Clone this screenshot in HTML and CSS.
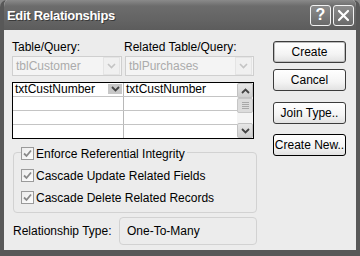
FILE: index.html
```html
<!DOCTYPE html>
<html>
<head>
    <title>Edit Relationships</title>
    <link rel="stylesheet" href="styles.css">
</head>
<body>
    <div class="window">
        <div class="titlebar">
            <span class="title">Edit Relationships</span>
            <div class="title-buttons">
                <span class="tbtn">?</span>
                <span class="tbtn close">
                    <svg width="13" height="13" viewBox="0 0 13 13"><path d="M2 2 L11 11 M11 2 L2 11" stroke="#fff" stroke-width="2.2" stroke-linecap="round"/></svg>
                </span>
            </div>
        </div>

        <div class="content">
            <div class="left">
                <div class="labels">
                    <span class="lbl-a">Table/Query:</span>
                    <span class="lbl-b">Related Table/Query:</span>
                </div>
                <div class="combos">
                    <div class="combo combo-a"><span>tblCustomer</span><span class="drop"><svg width="9" height="6" viewBox="0 0 9 6"><path d="M1 1 L4.5 4.5 L8 1" stroke="#c4c4c4" stroke-width="1.6" fill="none"/></svg></span></div>
                    <div class="combo combo-b"><span>tblPurchases</span><span class="drop"><svg width="9" height="6" viewBox="0 0 9 6"><path d="M1 1 L4.5 4.5 L8 1" stroke="#c4c4c4" stroke-width="1.6" fill="none"/></svg></span></div>
                </div>

                <div class="grid">
                    <div class="cells">
                        <div class="row">
                            <div class="cell c1">txtCustNumber<span class="cell-drop"><svg width="9" height="6" viewBox="0 0 9 6"><path d="M1 1 L4.5 4.5 L8 1" stroke="#444" stroke-width="1.8" fill="none"/></svg></span></div>
                            <div class="cell c2">txtCustNumber</div>
                        </div>
                        <div class="row"><div class="cell c1"></div><div class="cell c2"></div></div>
                        <div class="row"><div class="cell c1"></div><div class="cell c2"></div></div>
                        <div class="row last"><div class="cell c1"></div><div class="cell c2"></div></div>
                    </div>
                    <div class="scrollbar">
                        <div class="sb-btn"><svg width="9" height="6" viewBox="0 0 9 6"><path d="M1 5 L4.5 1.5 L8 5" stroke="#444" stroke-width="1.8" fill="none"/></svg></div>
                        <div class="sb-thumb"><span></span><span></span><span></span><span></span></div>
                        <div class="sb-track"></div>
                        <div class="sb-btn"><svg width="9" height="6" viewBox="0 0 9 6"><path d="M1 1 L4.5 4.5 L8 1" stroke="#444" stroke-width="1.8" fill="none"/></svg></div>
                    </div>
                </div>

                <div class="group">
                    <label class="check"><span class="box"><svg width="9" height="9" viewBox="0 0 9 9"><path d="M1 4.5 L3.5 7 L8 1.5" stroke="#8a8a8a" stroke-width="1.8" fill="none"/></svg></span>Enforce Referential Integrity</label>
                    <label class="check"><span class="box"><svg width="9" height="9" viewBox="0 0 9 9"><path d="M1 4.5 L3.5 7 L8 1.5" stroke="#8a8a8a" stroke-width="1.8" fill="none"/></svg></span>Cascade Update Related Fields</label>
                    <label class="check"><span class="box"><svg width="9" height="9" viewBox="0 0 9 9"><path d="M1 4.5 L3.5 7 L8 1.5" stroke="#8a8a8a" stroke-width="1.8" fill="none"/></svg></span>Cascade Delete Related Records</label>
                </div>

                <div class="reltype">
                    <span class="rel-label">Relationship Type:</span>
                    <div class="rel-box">One-To-Many</div>
                </div>
            </div>

            <div class="right">
                <button class="btn default">Create</button>
                <button class="btn">Cancel</button>
                <button class="btn join">Join Type..</button>
                <button class="btn focus">Create New..</button>
            </div>
        </div>
    </div>
</body>
</html>
```

FILE: styles.css
```css
body {
    margin: 0;
    background: #8a8a8a;
    font-family: "Liberation Sans", Arial, sans-serif;
    font-size: 11px;
    color: #000;
}
.window {
    width: 360px;
    height: 256px;
    box-sizing: border-box;
    background: #ececec;
    border: 4px solid #585858;
    border-top: none;
    border-bottom-width: 6px;
    border-radius: 7px 7px 0 0;
    display: flex;
    flex-direction: column;
    overflow: hidden;
}
.titlebar {
    height: 30px;
    margin: 0 -4px;
    padding: 0 7px;
    display: flex;
    align-items: center;
    justify-content: space-between;
    background: linear-gradient(#8a8a8a, #6c6c6c 20%, #636363 70%, #5c5c5c);
    border-top-left-radius: 7px;
    border-top-right-radius: 7px;
}
.title {
    color: #fff;
    font-weight: bold;
    font-size: 13px;
    letter-spacing: -0.3px;
    text-shadow: 1px 1px 0 #3a3a3a;
    padding-top: 1px;
}
.title-buttons {
    display: flex;
    gap: 2px;
    margin-right: -1px;
}
.tbtn {
    width: 19px;
    height: 19px;
    border: 1px solid #f2f2f2;
    border-radius: 3px;
    background: linear-gradient(#8c8c8c, #6a6a6a);
    color: #fff;
    font-weight: bold;
    font-size: 16px;
    display: flex;
    align-items: center;
    justify-content: center;
    line-height: 1;
}
.content {
    flex: 1;
    display: flex;
    padding: 9px 9px 0 8px;
    gap: 16px;
}
.left {
    width: 245px;
    display: flex;
    flex-direction: column;
}
.labels {
    display: flex;
    height: 15px;
    align-items: flex-end;
    font-size: 12px;
}
.lbl-a {
    width: 112px;
}
.combos {
    display: flex;
    gap: 3px;
    margin-top: 2px;
    width: 242px;
}
.combo {
    height: 18px;
    border: 1px solid #cfcfcf;
    background: #f4f4f4;
    color: #ababab;
    font-size: 12px;
    display: flex;
    align-items: center;
    justify-content: space-between;
    padding-left: 3px;
}
.combo-a {
    width: 105px;
}
.combo-b {
    flex: 1;
}
.drop {
    width: 15px;
    height: 16px;
    margin-right: 1px;
    border: 1px solid #e4e4e4;
    background: #f0f0f0;
    display: flex;
    align-items: center;
    justify-content: center;
}
.grid {
    margin-top: 6px;
    width: 240px;
    height: 55px;
    border: 1px solid #000;
    background: #fff;
    display: flex;
}
.cells {
    flex: 1;
}
.row {
    display: flex;
    height: 13px;
    border-bottom: 1px solid #c4c4c4;
}
.row.last {
    border-bottom: none;
}
.cell {
    font-size: 12px;
    line-height: 13px;
    padding-left: 2px;
    position: relative;
}
.c1 {
    width: 108px;
    border-right: 1px solid #b8b8b8;
}
.c2 {
    flex: 1;
}
.cell-drop {
    position: absolute;
    right: 1px;
    top: 1px;
    width: 14px;
    height: 10px;
    background: #c8c8c8;
    display: flex;
    align-items: center;
    justify-content: center;
}
.scrollbar {
    width: 16px;
    display: flex;
    flex-direction: column;
    background: #f4f4f4;
}
.sb-btn {
    height: 13px;
    border: 1px solid #c2c2c2;
    border-radius: 2px;
    background: linear-gradient(#e6e6e6, #cfcfcf);
    display: flex;
    align-items: center;
    justify-content: center;
}
.sb-thumb {
    height: 13px;
    border: 1px solid #c6c6c6;
    border-radius: 2px;
    background: #dcdcdc;
    display: flex;
    flex-direction: column;
    align-items: center;
    justify-content: center;
    gap: 1px;
}
.sb-thumb span {
    width: 7px;
    height: 1px;
    background: #a8a8a8;
}
.sb-track {
    flex: 1;
}
.group {
    margin-top: 13px;
    margin-left: 1px;
    height: 59px;
    border: 1px solid #d2d2d2;
    border-radius: 4px;
    position: relative;
    padding: 0 0 0 7px;
}
.check {
    display: flex;
    align-items: center;
    font-size: 12px;
    height: 13px;
    margin-top: 9px;
}
.check:first-child {
    margin-top: -6px;
    background: #ececec;
    width: max-content;
    padding-right: 2px;
}
.box {
    width: 11px;
    height: 11px;
    border: 1px solid #9a9a9a;
    background: linear-gradient(135deg, #ececec, #fdfdfd);
    margin-right: 2px;
    display: flex;
    align-items: center;
    justify-content: center;
}
.reltype {
    margin-top: 4px;
    display: flex;
    align-items: center;
}
.rel-label {
    width: 106px;
    padding-left: 1px;
    font-size: 12px;
}
.rel-box {
    width: 129px;
    height: 26px;
    border: 1px solid #d2d2d2;
    border-radius: 4px;
    display: flex;
    align-items: center;
    padding-left: 7px;
    font-size: 12px;
}
.right {
    width: 73px;
    display: flex;
    flex-direction: column;
    padding-top: 2px;
}
.btn {
    height: 22px;
    border: 1px solid #3c3c3c;
    border-radius: 3px;
    background: linear-gradient(#ffffff, #f4f4f4 60%, #e2e2e2);
    font-family: "Liberation Sans", Arial, sans-serif;
    font-size: 12px;
    color: #000;
    padding: 0;
    margin-bottom: 6px;
}
.btn.default {
    box-shadow: inset 0 0 0 1px #bdbdbd;
}
.btn.join {
    margin-top: 5px;
}
.btn.focus {
    margin-top: 4px;
    border-color: #000;
}
```
